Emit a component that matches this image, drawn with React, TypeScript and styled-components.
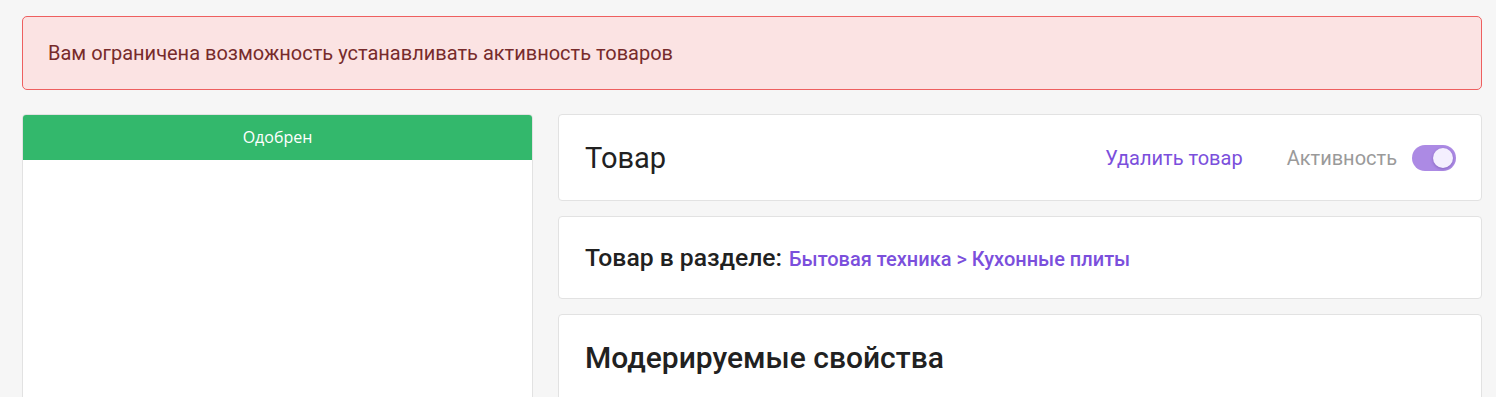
import React from "react";
import styled, { createGlobalStyle } from "styled-components";

const Global = createGlobalStyle`
  html, body { margin: 0; padding: 0; background: #f6f6f6; }
  body { font-family: Roboto, "Noto Sans", sans-serif; color: #212121; }
  * { box-sizing: border-box; }
`;

const Page = styled.div`
  padding: 16px 14px 0 22px;
  height: 397px;
  overflow: hidden;
`;

const Alert = styled.div`
  height: 74px;
  display: flex;
  align-items: center;
  padding: 0 25px;
  background: #fbe3e3;
  border: 1px solid #ee5f5f;
  border-radius: 5px;
  color: #772b2b;
  font-size: 20px;
  margin-bottom: 24px;
`;

const Columns = styled.div`
  display: grid;
  grid-template-columns: 511px 1fr;
  column-gap: 25px;
  align-items: start;
`;

const StatusCard = styled.div`
  background: #fff;
  border: 1px solid #e2e2e2;
  border-radius: 4px;
  height: 320px;
  overflow: hidden;
`;

const StatusHeader = styled.div<{ $color: string }>`
  height: 46px;
  margin: -1px -1px 0;
  background: ${(p) => p.$color};
  color: #fff;
  display: flex;
  align-items: center;
  justify-content: center;
  font-family: "Open Sans", "Noto Sans", sans-serif;
  font-size: 16px;
`;

const Stack = styled.div`
  display: flex;
  flex-direction: column;
  gap: 15px;
`;

const Card = styled.div<{ $height: number }>`
  background: #fff;
  border: 1px solid #e2e2e2;
  border-radius: 4px;
  min-height: ${(p) => p.$height}px;
  padding: 0 25px 0 26px;
  display: flex;
  align-items: center;
  justify-content: space-between;
`;

const TopCard = styled(Card)`
  align-items: flex-start;
  padding-top: 26px;
`;

const Title = styled.h1<{ $size: number; $weight?: number }>`
  margin: 0;
  font-size: ${(p) => p.$size}px;
  font-weight: ${(p) => p.$weight ?? 400};
  color: #212121;
  line-height: 34px;
`;

const Actions = styled.div`
  display: flex;
  align-items: center;
  gap: 44px;
`;

const LinkText = styled.a`
  color: #7b4fdc;
  font-size: 20px;
  text-decoration: none;
  cursor: pointer;
`;

const ToggleWrap = styled.label`
  display: flex;
  align-items: center;
  gap: 15px;
  color: #9a9a9a;
  font-size: 20px;
`;

const Track = styled.span<{ $on: boolean }>`
  position: relative;
  width: 44px;
  height: 26px;
  border-radius: 13px;
  background: ${(p) => (p.$on ? "#ac8ae4" : "#ccc")};
  display: inline-block;
`;

const Knob = styled.span<{ $on: boolean }>`
  position: absolute;
  top: 3px;
  left: ${(p) => (p.$on ? "21px" : "3px")};
  width: 20px;
  height: 20px;
  border-radius: 50%;
  background: #f4effe;
  box-shadow: 0 1px 3px rgba(60, 30, 120, 0.35);
`;

const Section = styled.div`
  font-size: 24.7px;
  font-weight: 500;
  color: #212121;
  display: flex;
  align-items: baseline;
  gap: 7px;
`;

const Crumb = styled.a`
  color: #7b4fdc;
  font-size: 20px;
  font-weight: 500;
  text-decoration: none;
`;

export default function App() {
  const active = true;
  return (
    <>
      <Global />
      <Page>
        <Alert>Вам ограничена возможность устанавливать активность товаров</Alert>
        <Columns>
          <StatusCard>
            <StatusHeader $color="#33b86c">Одобрен</StatusHeader>
          </StatusCard>
          <Stack>
            <Card $height={87}>
              <Title $size={29}>Товар</Title>
              <Actions>
                <LinkText>Удалить товар</LinkText>
                <ToggleWrap>
                  Активность
                  <Track $on={active}>
                    <Knob $on={active} />
                  </Track>
                </ToggleWrap>
              </Actions>
            </Card>
            <Card $height={83}>
              <Section>
                Товар в разделе:
                <Crumb>Бытовая техника &gt; Кухонные плиты</Crumb>
              </Section>
            </Card>
            <TopCard $height={120}>
              <Title $size={30} $weight={500}>Модерируемые свойства</Title>
            </TopCard>
          </Stack>
        </Columns>
      </Page>
    </>
  );
}
